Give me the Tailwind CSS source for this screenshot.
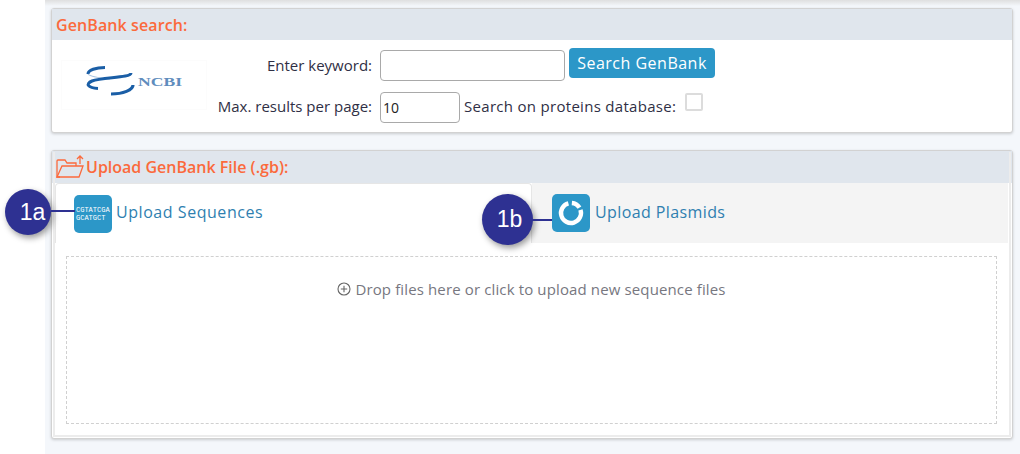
<!DOCTYPE html>
<html lang="en">
<head>
  <meta charset="UTF-8" />
  <title>GenBank search</title>
  <script src="https://cdn.jsdelivr.net/npm/@tailwindcss/browser@4"></script>
</head>
<body class="bg-white h-[454px] w-[1020px] overflow-hidden font-['Open_Sans',sans-serif] text-[15px] text-[#2f2f45]">
  <div class="relative ml-[45px] h-[454px] bg-[#f4f7fb] px-[6px] pt-[8px]">
    <div class="absolute left-0 right-0 top-0 h-[6px] bg-gradient-to-b from-[#dfdfdf] to-[#f4f7fb]"></div>

    <!-- search panel -->
    <section class="relative h-[125px] w-[962px] rounded-[3px] border border-[#d2d2d2] bg-white shadow-[0_1px_3px_rgba(0,0,0,0.18)]">
      <h2 class="flex h-[31px] items-center bg-[#e0e6ed] pl-[4px] text-[16px] font-semibold tracking-[0.1px] text-[#fb6a3c]">GenBank search:</h2>
      <div class="flex">
        <div class="ml-[9px] mt-[20px] h-[50px] w-[146px] border border-[#fcfcfc]">
          <svg width="110" height="40" viewBox="0 0 110 40" class="ml-[18px] block">
            <path d="M25 6.5 C16 6.5 8 9 8 13" fill="none" stroke="#1a5ea6" stroke-width="3" />
            <path d="M8 13 C10 16 20 17 30 18" fill="none" stroke="#a9c4e0" stroke-width="1.2" />
            <path d="M51 12 C51 17 22 16 12 20 C5 23 8 27 18 27.5" fill="none" stroke="#1a5ea6" stroke-width="3" />
            <path d="M31 33 C43 33 53 29 53 24" fill="none" stroke="#1a5ea6" stroke-width="3.2" />
            <text x="58" y="25" font-family="Liberation Serif, serif" font-size="13" font-weight="bold" fill="#5f8dbd" textLength="44" lengthAdjust="spacingAndGlyphs">NCBI</text>
          </svg>
        </div>
        <div class="ml-[10px] flex flex-col">
          <div class="mt-[10px] flex items-start">
            <label class="mt-[5px] w-[155px] whitespace-nowrap text-right leading-[20px]">Enter keyword:</label>
            <input type="text" class="ml-[8px] h-[31px] w-[185px] rounded-[4px] border border-[#a9a9a9] bg-white" />
            <button type="button" class="ml-[4px] -mt-[2px] h-[30px] w-[146px] rounded-[4px] bg-[#2c97c8] text-[16px] tracking-[0.5px] text-white">Search GenBank</button>
          </div>
          <div class="mt-[11px] flex items-start">
            <label class="mt-[4px] w-[155px] whitespace-nowrap text-right leading-[20px]">Max. results per page:</label>
            <input type="text" value="10" class="ml-[8px] h-[31px] w-[80px] rounded-[4px] border border-[#a9a9a9] bg-white pl-[2px] text-[14px] text-[#222]" />
            <span class="ml-[4px] mt-[4px] w-[213px] whitespace-nowrap tracking-[0.3px] leading-[20px]">Search on proteins database:</span>
            <span class="ml-[8px] mt-[1px] h-[18px] w-[18px] rounded-[2px] border-2 border-[#dcdcdc] bg-white"></span>
          </div>
        </div>
      </div>
    </section>

    <!-- upload panel -->
    <section class="relative mt-[17px] h-[289px] w-[962px] rounded-[3px] border border-[#d2d2d2] bg-white shadow-[0_1px_3px_rgba(0,0,0,0.18)]">
      <h2 class="flex h-[32px] items-center bg-[#e0e6ed] pl-[4px] text-[16px] font-semibold text-[#fb6a3c]">
        <svg width="30" height="24" viewBox="0 0 30 24" fill="none" stroke="#fb6a3c" stroke-width="1.3" class="-mt-[1px]">
          <path d="M4 22 L1 22 L1 6 Q1 5 2 5 L9 5 L11 8 L20 8 L20 11" />
          <path d="M1 22 L6 11 L27 11 L23 22 Z" />
          <path d="M24 9 L24 1 M21 4 L24 1 L27 4" />
        </svg>
        <span>Upload GenBank File (.gb):</span>
      </h2>

      <div class="mx-[3px] flex h-[60px]">
        <div class="flex h-[60px] w-[477px] items-center rounded-t-[4px] border-x border-t border-[#e6e6e6] bg-white pl-[18px] text-[16px] tracking-[0.55px] text-[#2f7fb0]">
          <span class="flex h-[38px] w-[38px] flex-col items-start justify-center rounded-[5px] bg-[#2c97c8] pl-[2px] font-['Liberation_Mono',monospace] text-[7px] leading-[8px] tracking-normal text-white">
            <span>CGTATCGA</span><span>GCATGCT</span>
          </span>
          <span class="ml-[4px] -mt-[3px]">Upload Sequences</span>
        </div>
        <div class="flex h-[60px] w-[476px] items-center bg-[#f4f4f4] pl-[20px] text-[16px] tracking-[0.4px] text-[#2f7fb0]">
          <span class="flex h-[38px] w-[38px] items-center justify-center rounded-[5px] bg-[#2c97c8]">
            <svg width="28" height="28" viewBox="0 0 28 28" fill="none" stroke="white" stroke-width="4.4">
              <path d="M23.5 10.9 A10 10 0 1 1 11.4 4.34" />
              <path d="M14.87 4.04 A10 10 0 0 1 22.48 8.7" />
            </svg>
          </span>
          <span class="ml-[5px] -mt-[2px]">Upload Plasmids</span>
        </div>
      </div>

      <div class="ml-[14px] mt-[13px] flex h-[168px] w-[931px] justify-center border border-dashed border-[#d0d0d0] pt-[22px] tracking-[0.13px] text-[#77777f]">
        <span class="flex h-[20px] items-center">
          <svg width="14" height="14" viewBox="0 0 14 14" fill="none" stroke="#666" stroke-width="1.1" class="mr-[4px]">
            <circle cx="7" cy="7" r="6" />
            <path d="M7 3.8 V10.2 M3.8 7 H10.2" />
          </svg>
          Drop files here or click to upload new sequence files
        </span>
      </div>
      <div class="pointer-events-none absolute inset-[1px] border-2 border-t-0 border-[#ececec]"></div>
    </section>

    <!-- callouts -->
    <div class="absolute left-[-40px] top-[189px] z-10 flex h-[46px] w-[46px] items-center justify-center rounded-full bg-[#2e3192] pl-[9px] font-['Liberation_Sans',sans-serif] text-[23px] text-white shadow-[2px_3px_6px_rgba(0,0,0,0.4)]">1a</div>
    <div class="absolute left-[6px] top-[210px] z-10 h-[2px] w-[24px] bg-[#2e3192]"></div>
    <div class="absolute left-[437px] top-[194px] z-10 flex h-[51px] w-[51px] items-center justify-center rounded-full bg-[#2e3192] pl-[4px] font-['Liberation_Sans',sans-serif] text-[23px] text-white shadow-[2px_3px_6px_rgba(0,0,0,0.4)]">1b</div>
    <div class="absolute left-[487px] top-[219px] z-10 h-[2px] w-[20px] bg-[#2e3192]"></div>
  </div>
</body>
</html>
